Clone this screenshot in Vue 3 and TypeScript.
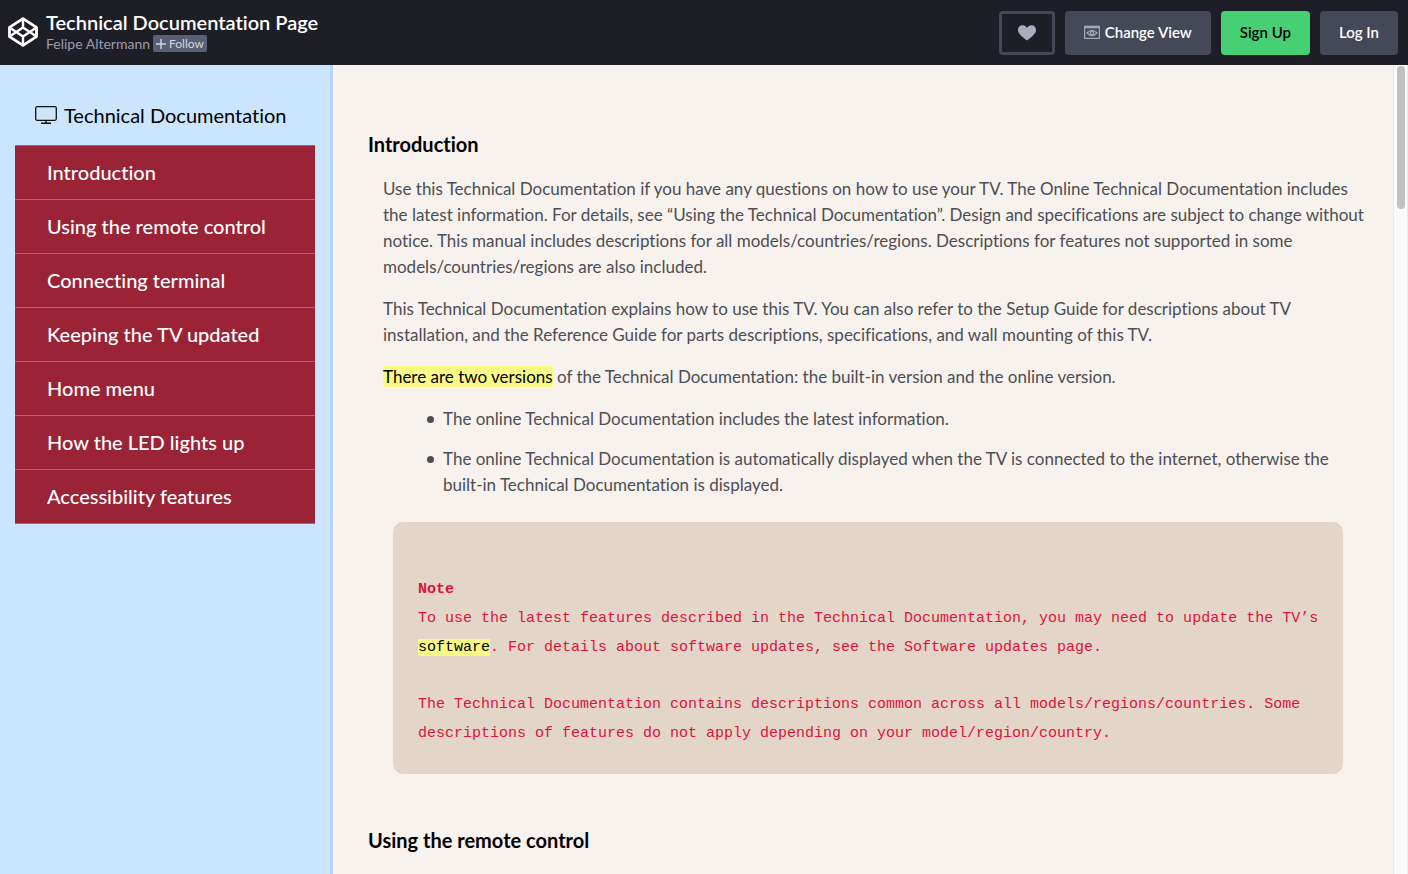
<script setup lang="ts">
interface NavItem {
  id: string
  label: string
}

const navItems: NavItem[] = [
  { id: 'introduction', label: 'Introduction' },
  { id: 'remote', label: 'Using the remote control' },
  { id: 'terminal', label: 'Connecting terminal' },
  { id: 'updates', label: 'Keeping the TV updated' },
  { id: 'home', label: 'Home menu' },
  { id: 'led', label: 'How the LED lights up' },
  { id: 'accessibility', label: 'Accessibility features' },
]
</script>

<template>
  <div class="page">
    <header class="topbar">
      <a class="logo" href="#" aria-label="Home">
        <svg viewBox="0 0 30 30" width="30" height="30" fill="none" stroke="#fff" stroke-width="2.8" stroke-linejoin="round">
          <path d="M15 1.6 28.5 10.4V19.6L15 28.4 1.5 19.6V10.4Z" />
          <path d="M1.5 10.4 15 19.6 28.5 10.4M1.5 19.6 15 10.4 28.5 19.6M15 1.6V10.4M15 19.6V28.4" stroke-width="2.4" />
        </svg>
      </a>
      <div class="heading">
        <h1 class="title">Technical Documentation Page</h1>
        <div class="byline">
          <a class="author" href="#">Felipe Altermann</a>
          <button class="follow" type="button">
            <svg viewBox="0 0 10 10" width="10" height="10" stroke="currentColor" stroke-width="1.4"><path d="M5 0V10M0 5H10" /></svg>
            Follow
          </button>
        </div>
      </div>
      <div class="actions">
        <button class="btn love" type="button" aria-label="Love">
          <svg viewBox="0 0 18 16" width="18" height="16" fill="#aaaebc">
            <path d="M9 15.4C6 12.8 0 9.4 0 4.9 0 2.2 2 .3 4.6.3 6.4.3 8 1.3 9 2.9 10 1.3 11.6.3 13.4.3 16 .3 18 2.2 18 4.9 18 9.4 12 12.8 9 15.4Z" />
          </svg>
        </button>
        <button class="btn view" type="button">
          <svg viewBox="0 0 16 14" width="16" height="14" fill="none" stroke="#a4a8b5">
            <path d="M.6 1.5H15.4V13.3H.6Z" stroke-width="1.2" />
            <path d="M0 2H16" stroke-width="2.6" />
            <path d="M3 8Q8 2.8 13 8Q8 13.2 3 8Z" stroke-width="1.2" />
            <circle cx="8" cy="8" r="1.6" stroke-width="1.3" />
          </svg>
          Change View
        </button>
        <button class="btn signup" type="button">Sign Up</button>
        <button class="btn" type="button">Log In</button>
      </div>
    </header>

    <div class="body">
      <nav class="sidebar" aria-label="Technical Documentation">
        <div class="brand">
          <svg viewBox="0 0 22 18" width="22" height="18" fill="none" stroke="#111">
            <rect x=".7" y=".7" width="20.6" height="13.6" rx="1.5" stroke-width="1.3" />
            <path d="M11 14.3V17M6 17.2H16" stroke-width="1.4" />
          </svg>
          Technical Documentation
        </div>
        <ul class="links">
          <li v-for="item in navItems" :key="item.id">
            <a :href="'#' + item.id">{{ item.label }}</a>
          </li>
        </ul>
      </nav>

      <main class="content">
        <section id="introduction">
          <h2>Introduction</h2>
          <div class="text">
            <p>
              Use this Technical Documentation if you have any questions on how to use your TV. The Online Technical
              Documentation includes the latest information. For details, see “Using the Technical Documentation”. Design
              and specifications are subject to change without notice. This manual includes descriptions for all
              models/countries/regions. Descriptions for features not supported in some models/countries/regions are also
              included.
            </p>
            <p>
              This Technical Documentation explains how to use this TV. You can also refer to the Setup Guide for
              descriptions about TV installation, and the Reference Guide for parts descriptions, specifications, and wall
              mounting of this TV.
            </p>
            <p>
              <mark>There are two versions</mark> of the Technical Documentation: the built-in version and the online
              version.
            </p>
            <ul class="bullets">
              <li>The online Technical Documentation includes the latest information.</li>
              <li>
                The online Technical Documentation is automatically displayed when the TV is connected to the internet,
                otherwise the built-in Technical Documentation is displayed.
              </li>
            </ul>
            <div class="note">
              <strong>Note</strong>
              <p>
                To use the latest features described in the Technical Documentation, you may need to update the TV’s
                <mark>software</mark>. For details about software updates, see the Software updates page.
              </p>
              <p>
                The Technical Documentation contains descriptions common across all models/regions/countries. Some
                descriptions of features do not apply depending on your model/region/country.
              </p>
            </div>
          </div>
        </section>
        <section id="remote">
          <h2>Using the remote control</h2>
        </section>
      </main>

      <div class="scroll-track" aria-hidden="true">
        <div class="scroll-thumb"></div>
      </div>
    </div>
  </div>
</template>

<style>
body {
  margin: 0;
}
</style>

<style scoped>
.page {
  display: flex;
  flex-direction: column;
  height: 100vh;
  overflow: hidden;
  font-family: Lato, sans-serif;
  font-variant-ligatures: none;
  color: #000;
}

.topbar {
  display: flex;
  align-items: center;
  flex: none;
  height: 65px;
  box-sizing: border-box;
  padding: 0 10px 0 8px;
  background: #1e1f26;
}

.logo {
  display: flex;
  margin-right: 8px;
  padding-bottom: 1px;
}

.heading {
  flex: 1;
}

.title {
  margin: 0;
  font-size: 20px;
  line-height: 22px;
  font-weight: 600;
  color: #fff;
}

.byline {
  display: flex;
  align-items: center;
  gap: 3px;
  height: 22px;
}

.author {
  font-size: 14px;
  line-height: 20px;
  color: #9b9dad;
  text-decoration: none;
}

.follow {
  display: flex;
  align-items: center;
  gap: 3px;
  height: 17px;
  padding: 0 3px;
  border: 0;
  border-radius: 2px;
  background: #5a5f73;
  color: #d5d7de;
  font: 400 12px/16px Lato, sans-serif;
}

.actions {
  display: flex;
  gap: 10px;
}

.btn {
  display: flex;
  align-items: center;
  justify-content: center;
  gap: 5px;
  height: 44px;
  padding: 0 19px 1px;
  border: 0;
  border-radius: 4px;
  background: #444857;
  color: #fff;
  font: 600 15px/20px Lato, sans-serif;
}

.love {
  padding: 0 16px;
  border: 3px solid #444857;
  background: #1e1f26;
}

.signup {
  background: #47cf73;
  color: #000;
}

.body {
  display: flex;
  flex: 1;
  min-height: 0;
}

.sidebar {
  flex: none;
  width: 300px;
  padding: 0 15px;
  border-right: 3px solid #b0d6ff;
  background: #cce5ff;
}

.brand {
  display: flex;
  align-items: center;
  gap: 7px;
  padding: 35px 20px 15px;
  font-size: 20px;
  line-height: 30px;
}

.links {
  margin: 0;
  padding: 0;
  list-style: none;
  border-bottom: 1px solid #8f7076;
  background: #9a2335;
}

.links li {
  border-top: 1px solid #8f7076;
}

.links a {
  display: block;
  padding: 11px 32px 12px;
  font-size: 20px;
  line-height: 30px;
  font-weight: 500;
  color: #fff;
  text-decoration: none;
}

.content {
  flex: 1;
  min-width: 0;
  overflow: hidden;
  padding: 0 25px 0 35px;
  background: #f7f2ee;
}

h2 {
  margin: 0;
  padding: 65px 0 18px;
  font-size: 20px;
  line-height: 28px;
  font-weight: 700;
}

.text {
  padding: 0 0 0 15px;
  font-size: 17px;
  line-height: 26px;
  color: #4d4e53;
}

.text p {
  margin: 0 0 16px;
}

mark {
  background: #f9f986;
  color: #000;
}

.bullets {
  margin: 0;
  padding: 0 0 0 44px;
  list-style: none;
}

.bullets li {
  display: flex;
  gap: 9px;
  margin-bottom: 14px;
}

.bullets li::before {
  content: '';
  flex: none;
  width: 7px;
  height: 7px;
  margin-top: 10px;
  border-radius: 50%;
  background: #4d4e53;
}

.note {
  margin: 24px 25px 0 10px;
  padding: 53px 20px 26px 25px;
  border-radius: 10px;
  background: #e3d5c7;
  color: #dc143c;
  font-family: "Liberation Mono", monospace;
  font-size: 15px;
  line-height: 29px;
}

.note strong {
  display: block;
}

.note p {
  margin: 0 0 28px;
}

.note p:last-child {
  margin: 0;
}

#remote h2 {
  padding-top: 52px;
}

.scroll-track {
  flex: none;
  width: 8px;
  padding: 1px 2px 0 3px;
  border-left: 1px solid #e8e8e8;
  border-right: 1px solid #ececec;
  background: #fafafa;
}

.scroll-thumb {
  height: 143px;
  border-radius: 4px;
  background: #c1c1c1;
}
</style>
